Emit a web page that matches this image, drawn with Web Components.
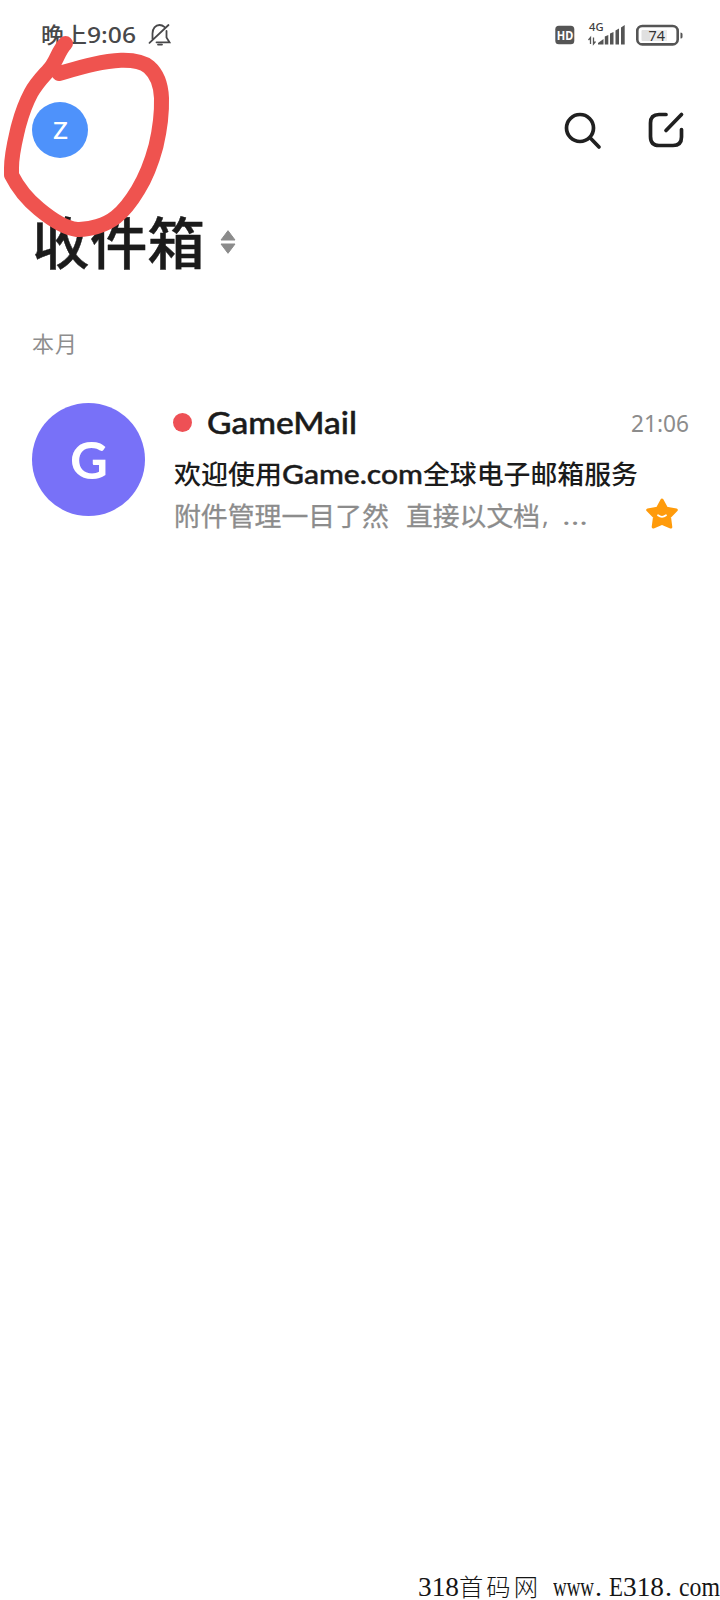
<!DOCTYPE html>
<html lang="zh-CN">
<head>
<meta charset="utf-8">
<title>收件箱</title>
<style>
html,body{margin:0;background:#fff}
body{width:720px;height:1600px;overflow:hidden;font-family:"Noto Sans","Noto Sans CJK SC",sans-serif;color:#1b1b1b}
</style>
</head>
<body>
<mail-screen></mail-screen>
<script>
function define(name, html, setup) {
  const t = document.createElement('template');
  t.innerHTML = html;
  customElements.define(name, class extends HTMLElement {
    connectedCallback() {
      if (this.shadowRoot) return;
      this.attachShadow({mode: 'open'}).append(t.content.cloneNode(true));
      if (setup) setup(this);
    }
  });
}

// A line of text scaled horizontally to the width it is given.
define('fit-text', `<style>
:host{display:inline-block;white-space:pre;flex:none}
span{display:inline-block;transform-origin:0 50%;white-space:pre}
</style><span><slot></slot></span>`, el => {
  const w = +el.getAttribute('w'), s = el.shadowRoot.querySelector('span');
  const n = s.getBoundingClientRect().width;
  el.style.width = w + 'px';
  if (n) s.style.transform = 'scaleX(' + w / n + ')';
});

define('status-bar', `<style>
:host{display:flex;height:70px;box-sizing:border-box;padding:0 37px 0 41px;align-items:center;color:#48484a}
fit-text{font:500 21.5px/30px "Noto Sans","Noto Sans CJK SC",sans-serif}
.bell{margin-left:12px}
.right{margin-left:auto}
svg{display:block}
</style>
<fit-text w="46">晚上</fit-text><fit-text w="49">9:06</fit-text>
<svg class="bell" width="24" height="26" viewBox="0 0 24 26" fill="none" stroke="#48484a" stroke-width="1.8" stroke-linecap="round">
<path d="M4.500 17V11.500C4.500 6.500 7.500 3 11.500 3C13.500 3 15 3.600 16.300 4.800M18.500 9V15.500L21.500 20.300H8.500M1.500 20.800L20.500 3M10 22.600H14"/></svg>
<svg class="right" width="128" height="36" viewBox="0 -4 128 36">
<rect x=".3" y="4.700" width="19" height="18.600" rx="3.500" fill="#555"/>
<text x="1.800" y="18.800" font-family="Noto Sans" font-size="12.500" font-weight="700" fill="#fff" textLength="16.500" lengthAdjust="spacingAndGlyphs">HD</text>
<text x="34" y="9.500" font-family="Noto Sans" font-size="10" font-weight="500" fill="#404040" textLength="14.500" lengthAdjust="spacingAndGlyphs">4G</text>
<path d="M35.500 23V16.500L33.500 19M38.500 16.500V23L40.500 20.500" fill="none" stroke="#555" stroke-width="1.300"/>
<path d="M43 23.500V22L48.500 18V23.500ZM49.800 23.500V15.500L53.300 14V23.500ZM55 23.500V12.500L58.500 11V23.500ZM60.500 23.500V9.500L64 7.500V23.500ZM66 23.500V6.500L69.700 4V23.500Z" fill="#555"/>
<rect x="82.300" y="5" width="40.400" height="18.400" rx="5" fill="none" stroke="#555" stroke-width="2.600"/>
<rect x="86.500" y="9" width="9" height="11" rx="1" fill="#e0e0e0"/><rect x="95" y="9" width="17" height="11" fill="#ececec"/>
<path d="M125.500 11.500q2 0 2 1.500v3q0 1.500-2 1.500z" fill="#555"/>
<text x="93.500" y="19.500" font-family="Noto Sans" font-size="15" fill="#333" textLength="16.500" lengthAdjust="spacingAndGlyphs">74</text>
</svg>`);

define('letter-avatar', `<style>
:host{display:flex;flex:none;align-items:center;justify-content:center;border-radius:50%;color:#fff;line-height:1}
</style><slot></slot>`);

define('app-bar', `<style>
:host{display:flex;height:120px;box-sizing:border-box;padding:0 35px 0 32px;align-items:center}
letter-avatar{width:56px;height:56px;background:#4e92fb;font-size:24px;font-weight:500}
.t{margin-left:auto}
svg{display:block;fill:none;stroke:#202020;stroke-width:3.700;stroke-linecap:round;stroke-linejoin:round}
</style>
<letter-avatar><fit-text w="15">Z</fit-text></letter-avatar>
<svg class="t" width="40" height="40" viewBox="563 110 40 40"><circle cx="580" cy="128" r="13.500"/><path d="M590.300 138L599 147"/></svg>
<svg style="margin-left:43px" width="39" height="40" viewBox="646 110 39 40"><path d="M666 114.500H659Q650.500 114.500 650.500 123V136.500Q650.500 145.500 659 145.500H673Q681.500 145.500 681.500 137V129.500M666 130.500L681.500 114.500"/></svg>`);

define('folder-title', `<style>
:host{display:flex;align-items:center;padding-left:32px;box-sizing:border-box;height:103px}
fit-text{font:500 55.500px/80px "Noto Sans CJK SC",sans-serif;-webkit-text-stroke:.4px #1b1b1b;margin-top:-3px}
svg{margin-left:15px}
</style>
<fit-text w="173">收件箱</fit-text>
<svg width="16" height="24" viewBox="0 0 16 24" fill="#8b8b8b" stroke="#8b8b8b" stroke-linejoin="round"><path d="M8 .7L15 10H1ZM1 14H15L8 23.300Z"/></svg>`);

define('section-label', `<style>
:host{display:flex;height:97px;box-sizing:border-box;padding:2px 0 0 32px;align-items:center;color:#8e8e8e}
fit-text{font:400 21.500px/32px "Noto Sans CJK SC",sans-serif;letter-spacing:1px}
</style><fit-text w="46"><slot></slot></fit-text>`);

define('mail-row', `<style>
:host{display:flex;padding:13px 32px 0 32px}
letter-avatar{width:113px;height:113px;background:#7871f8;font:700 52px/1 Lato,sans-serif}
letter-avatar fit-text{margin-top:-1px}
.b{flex:1;margin-left:28px;margin-top:-1px}
.l{display:flex;align-items:center;white-space:pre}
.h{height:40px}
i{width:19px;height:19px;border-radius:50%;background:#ee5055;margin-right:15px}
.n{font:500 31.500px/40px Lato,"Noto Sans",sans-serif;-webkit-text-stroke:.5px #1b1b1b}
.time{font:400 23px/40px "Noto Sans";color:#8c8c8c;margin-left:auto;margin-right:-1px;margin-top:2px}
.s{height:40px;margin-top:12px;font:500 26px/40px "Noto Sans","Noto Sans CJK SC",sans-serif}
.g{font:500 27px/40px Lato,sans-serif;-webkit-text-stroke:.4px #1b1b1b}
.s fit-text:first-child,.p fit-text:first-child{margin-left:.5px}
.p{height:40px;margin-top:1px;font:400 26px/40px "Noto Sans CJK SC",sans-serif;color:#8c8c8c;-webkit-text-stroke:.3px #8c8c8c}
.u{font-family:"Noto Sans";-webkit-text-stroke:0}
svg{margin-left:auto;margin-right:9px;margin-top:-2px}
</style>
<letter-avatar><fit-text w="38">G</fit-text></letter-avatar>
<div class="b">
<div class="l h"><i></i><fit-text class="n" w="150">GameMail</fit-text><fit-text class="time" w="58">21:06</fit-text></div>
<div class="l s"><fit-text w="108">欢迎使用</fit-text><fit-text class="g" w="141">Game.com</fit-text><fit-text w="215">全球电子邮箱服务</fit-text></div>
<div class="l p"><fit-text w="215">附件管理一目了然</fit-text><fit-text w="17"> </fit-text><fit-text w="134">直接以文档</fit-text><fit-text class="u" w="20" style="margin-left:2px">,  </fit-text><fit-text class="u" w="26">...</fit-text>
<svg width="34" height="34" viewBox="0 0 34 34"><path d="M17 3L21.500 11.200L31.300 13L24.500 19.900L25.800 30L17 26.300L8.200 30L9.500 19.900L2.700 13L12.500 11.200Z" fill="#ff9b0b" stroke="#ff9b0b" stroke-width="3" stroke-linejoin="round"/><path d="M13 18.300Q17 21.500 21 18.300" fill="none" stroke="#fff" stroke-width="1.800" stroke-linecap="round"/></svg></div>
</div>`);

define('site-mark', `<style>
:host{display:flex;justify-content:flex-end;align-items:baseline;color:#151515;font:27px/26px "Liberation Serif",serif}
.c{font:300 24px/24px "Noto Sans CJK SC",sans-serif;letter-spacing:3px}
.d{margin:0 7px 0 1px}
</style><fit-text w="41">318</fit-text><fit-text class="c" w="82">首码网</fit-text><fit-text w="12"> </fit-text><fit-text w="41">www</fit-text><fit-text class="d" w="7">.</fit-text><fit-text w="14">E</fit-text><fit-text w="41">318</fit-text><fit-text class="d" w="7">.</fit-text><fit-text w="41">com</fit-text>`);

// Freehand marker ring lying over the header.
define('marker-ring', `<style>
:host{position:absolute;left:0;top:0;pointer-events:none}
svg{display:block}
</style><svg width="180" height="250" viewBox="0 0 180 250"><path d="M65.500 43.500C59 50 57 59 52 66C47 73 38 80 31 93C23 108 21 117 18 128C15 141 11.500 154 11.500 168V175C18 188 28 200 39 209C51 219 64 228 77 229.500C90 230 106 225 116 217C126 209 132 200 138 190C146 177 152 161 156 146C160 129 162 115 161.500 98C161 86 157 74 149 67C142 61 132 60 121 60.300C102 61 82 67 59 73.500" fill="none" stroke="#ef534f" stroke-width="15" stroke-linecap="round" stroke-linejoin="round"/></svg>`);

define('mail-screen', `<style>
:host{display:flex;flex-direction:column;position:relative;width:720px;height:1600px;background:#fff}
site-mark{margin-top:auto}
</style>
<status-bar></status-bar>
<app-bar></app-bar>
<folder-title></folder-title>
<section-label>本月</section-label>
<mail-row></mail-row>
<site-mark></site-mark>
<marker-ring></marker-ring>`);
</script>
</body>
</html>
